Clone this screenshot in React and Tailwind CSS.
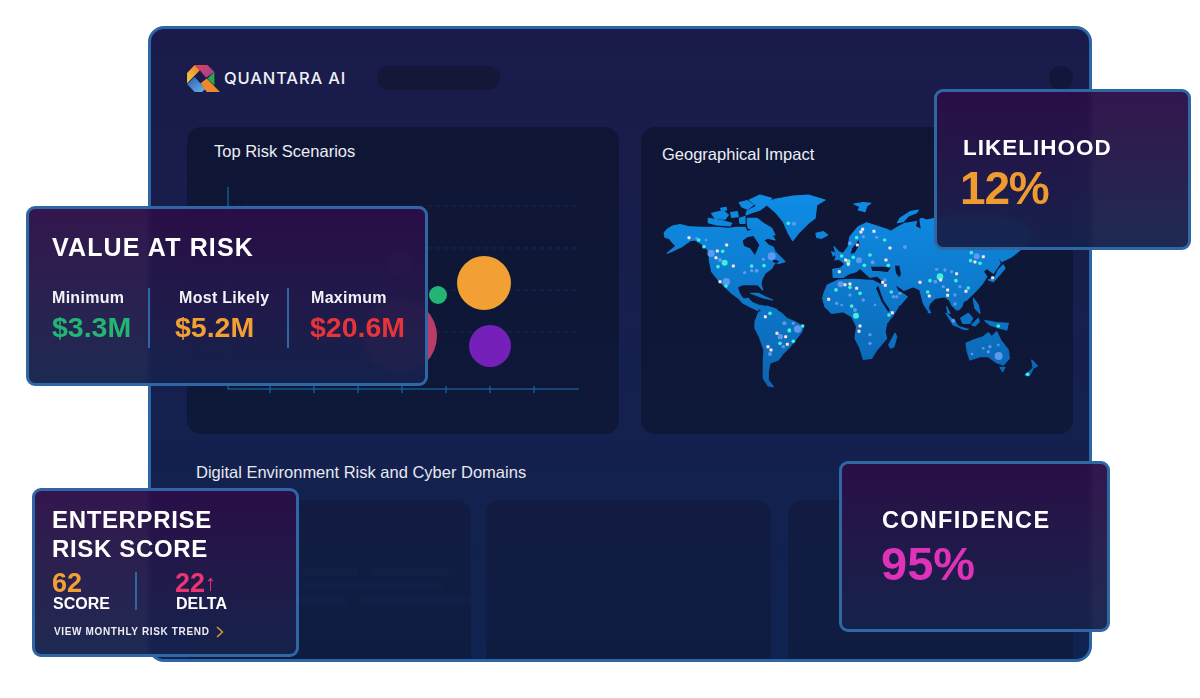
// coastlines traced in three blocks, each with its own origin (see toScreen)
const landA = [
  "13,128 22,118 38,108 60,104 85,110 120,112 165,112 205,115 235,112 255,112 262,125 290,112 330,125 345,150 325,145 310,150 325,165 340,172 345,185 360,200 375,215 360,220 345,218 335,235 315,250 305,270 303,283 308,300 295,285 265,283 245,285 232,292 238,310 248,325 270,335 295,345 320,350 350,358 330,360 300,358 275,350 250,335 215,310 195,290 175,270 155,245 148,210 148,185 130,165 105,150 90,152 65,170 40,182 22,190 48,168 35,155 28,145 15,142",
  "238,38 262,32 280,45 262,58 245,50",
  "268,30 300,15 335,25 320,45 300,60 275,68 258,75 262,62 290,48",
  "155,70 190,62 205,75 195,88 165,85",
  "212,68 232,65 235,80 215,82",
  "145,85 185,92 215,100 210,108 170,105 145,98",
  "182,55 198,52 200,60 185,62",
  "238,85 255,80 255,100 240,100",
  "262,85 290,85 310,100 335,115 345,135 325,135 310,120 295,125 280,115 265,115 262,100",
  "315,40 345,28 400,18 445,15 495,30 470,45 465,85 445,100 415,130 398,152 385,130 370,95 345,65",
  "468,130 490,125 503,135 485,145 470,142",
  "272,310 295,310 315,320 338,330 310,324",
];
const waterA = [
  "248,152 262,142 280,138 290,152 298,165 290,183 285,195 270,175 252,168",
  "340,208 358,213 350,220 338,216",
];
const landB = [
  "38,238 62,234 75,222 55,205 45,195 50,185 70,190 85,170 85,165 90,140 115,110 140,98 170,108 200,118 215,125 200,132 235,110 255,100 290,95 305,85 320,90 345,85 400,75 500,70 600,95 640,130 600,180 575,200 545,215 530,190 540,220 520,250 500,235 490,245 500,260 488,280 470,300 455,315 440,330 430,335 425,350 415,360 400,340 375,320 345,325 330,340 322,360 310,340 300,300 280,290 255,300 240,305 262,320 240,345 210,355 190,320 178,290 192,275 172,258 150,262 135,248 120,235 108,245 90,250 70,262 40,262",
  "232,98 240,85 270,65 295,60 290,68 265,78 250,95",
  "102,42 130,38 152,40 140,48 135,65 115,60 120,50",
  "42,170 60,190 65,205 45,210 50,195",
  "35,185 45,188 40,198",
  "505,270 525,262 535,240 550,225 555,235 538,255 520,275",
];
const waterB = [
  "153,230 190,230 212,233 203,246 175,243 157,243",
  "225,227 238,227 243,253 237,262 228,249",
  "97,175 116,150 118,165 104,188 92,192",
  "228,287 248,300 252,310 236,303",
  "288,108 293,88 298,88 302,116",
];
const landC = [
  "45,95 55,70 80,48 100,55 125,70 140,85 165,95 190,110 185,125 170,145 150,170 130,190 115,210 90,220 85,245 85,270 100,290 85,288 70,265 70,215 72,180 58,140 45,115",
  "0,30 25,25 42,45 55,62 30,50 10,40",
  "252,10 262,-15 295,-30 340,-32 400,-28 425,-15 440,20 455,50 475,50 460,75 440,100 435,125 440,145 410,180 395,205 370,208 360,175 345,145 350,110 335,80 310,65 275,70 255,50 248,25",
  "446,165 465,130 470,140 462,170 452,175",
  "565,55 572,68 565,68",
  "618,70 645,95 655,110 640,105",
  "650,108 685,118 670,118",
  "620,50 630,70 624,70",
  "662,85 685,70 698,85 690,100 668,100",
  "695,105 715,85 718,95 705,108",
  "700,25 715,45 720,70 705,55",
  "735,92 770,98 805,100 800,120 770,112 750,105",
  "678,160 700,150 730,140 745,128 755,140 770,125 782,150 805,180 808,205 790,225 770,218 745,200 720,200 690,210 682,185",
  "780,232 795,232 788,245",
  "875,210 892,228 880,235",
  "880,235 855,255 868,258",
  "625,0 660,5 665,30 650,60 635,45 625,20",
];
const waterC = ["415,-12 430,30 450,60 445,66 425,35 408,-5"];

const toScreen = (points, ox, oy) =>
  points
    .split(" ")
    .map((pair) => {
      const [x, y] = pair.split(",").map(Number);
      return `${(ox + x / 3).toFixed(1)},${(oy + y / 3).toFixed(1)}`;
    })
    .join(" ");

const landShapes = [
  ...landA.map((p) => toScreen(p, 660, 190)),
  ...landB.map((p) => toScreen(p, 820, 190)),
  ...landC.map((p) => toScreen(p, 740, 290)),
];
const waterShapes = [
  ...waterA.map((p) => toScreen(p, 660, 190)),
  ...waterB.map((p) => toScreen(p, 820, 190)),
  ...waterC.map((p) => toScreen(p, 740, 290)),
];

const pinkDots = [[117,173],[230,195],[202,213],[198,233],[250,258],[210,305],[638,148],[633,156],[672,154],[622,195],[720,204],[708,240],[587,240],[595,253],[568,275],[585,314],[600,312],[620,325],[536,358],[698,307],[706,316],[727,398],[630,438],[627,454],[810,307],[838,348],[893,330],[893,346],[948,334],[1028,293],[1000,230],[975,246],[920,281],[872,300],[346,410],[381,460],[407,470],[412,493],[354,500],[363,510]];
const cyanDots = [[146,180],[162,200],[218,214],[204,260],[305,258],[342,257],[228,318],[415,130],[620,173],[704,180],[575,228],[610,232],[643,256],[660,225],[715,256],[558,330],[605,378],[630,340],[717,405],[724,336],[840,302],[918,302],[955,324],[833,336],[360,400],[458,438],[418,452],[390,490],[430,484],[964,218],[962,242],[990,250],[1133,583],[1045,438],[600,322],[418,450]];
const bigCyan = [[224,248,9],[870,290,10],[618,407,9],[595,245,7]];
const blueDots = [[183,220,11],[229,305,11],[365,229,12],[432,131,6],[320,272,6],[284,278,5],[627,241,9],[668,247,6],[572,313,9],[765,201,6],[980,229,9],[856,305,6],[391,470,8],[443,447,11],[360,522,6],[403,430,6],[1046,528,12],[1020,500,5],[660,464,5],[615,390,6],[558,328,5],[168,180,4],[210,240,6],[740,350,5],[915,372,5],[910,422,6],[966,522,4],[140,175,4],[340,238,5],[305,272,5],[600,190,6],[640,170,5],[680,172,5],[705,300,5],[730,350,5],[750,340,5],[885,270,5],[905,275,5],[860,268,5],[880,320,5],[915,345,5],[930,320,5],[560,370,5],[575,375,4],[600,345,5],[640,360,5],[675,375,4],[660,490,5],[430,430,5],[400,500,5],[1015,515,5],[1000,505,4],[1045,495,4]];

function Logo() {
  return (
    <svg viewBox="33 25 95 78" className="w-[33px] h-[27px] shrink-0">
      <defs>
        <linearGradient id="lgTop" x1="0" y1="0" x2="1" y2="1">
          <stop offset="0" stopColor="#e0455a" />
          <stop offset="1" stopColor="#9a3d9a" />
        </linearGradient>
        <linearGradient id="lgLeft" x1="0" y1="1" x2="1" y2="0">
          <stop offset="0" stopColor="#f6cf3a" />
          <stop offset="1" stopColor="#ee7b2d" />
        </linearGradient>
        <linearGradient id="lgBlue" x1="0" y1="0" x2="1" y2="1">
          <stop offset="0" stopColor="#2a5fae" />
          <stop offset="1" stopColor="#6db1ec" />
        </linearGradient>
      </defs>
      <polygon points="55,25 70,40 33,78 33,48" fill="url(#lgLeft)" />
      <polygon points="55,25 92,25 112,45 88,62 70,40" fill="url(#lgTop)" />
      <polygon points="112,45 112,84 92,64" fill="#2aa84a" />
      <polygon points="33,80 55,60 86,94 76,103 55,103" fill="url(#lgBlue)" />
      <polygon points="72,78 90,64 128,103 90,103" fill="#ec8a2a" />
    </svg>
  );
}

function RiskChart() {
  return (
    <svg viewBox="0 0 432 274" className="block w-[432px] h-[274px]">
      {[46, 88, 130, 172].map((y) => (
        <line key={y} x1="41" x2="392" y1={y} y2={y} stroke="#162650" strokeDasharray="4 4" />
      ))}
      <line x1="41" x2="41" y1="27" y2="229" stroke="#1678b4" />
      <line x1="41" x2="392" y1="229" y2="229" stroke="#1678b4" />
      {[83, 127, 171, 215, 259, 303, 347].map((x) => (
        <line key={x} x1={x} x2={x} y1="226" y2="233" stroke="#1678b4" />
      ))}
      <circle cx="213" cy="104" r="12" fill="#6b1f6e" />
      <circle cx="213" cy="176" r="37" fill="#b83c68" />
      <circle cx="251" cy="135" r="9" fill="#22b573" />
      <circle cx="297" cy="123" r="27" fill="#f2a033" />
      <circle cx="303" cy="186" r="21" fill="#7520b8" />
      <text x="12" y="75" fontSize="10" fill="#26305c">2024</text>
      <text x="12" y="122" fontSize="10" fill="#26305c">2022</text>
      <text x="12" y="192" fontSize="10" fill="#26305c">2019</text>
    </svg>
  );
}

function WorldMap() {
  return (
    <svg viewBox="650 180 400 220" className="block w-[400px] h-[220px]">
      <defs>
        <linearGradient id="mapFill" gradientUnits="userSpaceOnUse" x1="0" y1="195" x2="0" y2="390">
          <stop offset="0" stopColor="#0f8de6" />
          <stop offset="1" stopColor="#0b64b0" />
        </linearGradient>
      </defs>
      {landShapes.map((p, i) => (
        <polygon key={i} points={p} fill="url(#mapFill)" stroke="url(#mapFill)" strokeWidth="1.2" strokeLinejoin="round" />
      ))}
      {waterShapes.map((p, i) => (
        <polygon key={i} points={p} fill="#0d1538" />
      ))}
      <g transform="translate(650 180) scale(0.3333)">
        {blueDots.map(([x, y, r], i) => (
          <circle key={i} cx={x} cy={y} r={r} fill="#6c9ff5" opacity="0.85" />
        ))}
        {cyanDots.map(([x, y], i) => (
          <circle key={i} cx={x} cy={y} r="5.5" fill="#3ff0d8" />
        ))}
        {bigCyan.map(([x, y, r], i) => (
          <circle key={i} cx={x} cy={y} r={r} fill="#3ff0d8" />
        ))}
        {pinkDots.map(([x, y], i) => (
          <rect key={i} x={x - 4.5} y={y - 4.5} width="9" height="9" rx="2" fill="#fde3dc" />
        ))}
      </g>
    </svg>
  );
}

function FloatCard({ className, children }) {
  return (
    <div
      className={`absolute border-[3px] border-[#2f67a5] rounded-[9px] bg-linear-to-b from-[#2b0d47]/[0.965] to-[#14224c]/[0.965] backdrop-blur-[2px] text-white ${className}`}
    >
      {children}
    </div>
  );
}

function Stat({ label, value, color, labelClass }) {
  return (
    <>
      <div className={`text-[16px] leading-[19px] font-bold tracking-[0.3px] text-[#f3f3f7] ${labelClass}`}>{label}</div>
      <div className={`mt-[5px] text-[28.5px] leading-[30px] font-bold ${color}`}>{value}</div>
    </>
  );
}

export default function App() {
  return (
    <div className="relative w-[1200px] h-[698px] bg-white overflow-hidden pl-[148px] pt-[26px] font-['Liberation_Sans',Arial,sans-serif]">
      <div className="w-[944px] h-[636px] border-[3px] border-[#2c66a4] rounded-[16px] overflow-hidden bg-linear-to-b from-[#1a1b4a] to-[#0f2350] pl-[36px] pr-[16px] pt-[37px]">
        <div className="flex items-center h-[24px]">
          <Logo />
          <span className="ml-[4px] font-['Inter',sans-serif] font-medium text-[16.5px] tracking-[0.85px] text-[#eef0f6]">
            QUANTARA AI
          </span>
          <div className="ml-[31px] w-[123px] h-[24px] rounded-full bg-[#151738]"></div>
          <div className="ml-auto w-[24px] h-[24px] rounded-full bg-[#12163a]"></div>
        </div>

        <div className="flex gap-[22px] mt-[37px]">
          <div className="w-[432px] h-[307px] rounded-[14px] bg-linear-to-b from-[#0f1535] to-[#0e1838]">
            <div className="pl-[27px] pt-[15px] h-[33px] text-[16.5px] leading-[18px] text-[#eceef4]">
              Top Risk Scenarios
            </div>
            <RiskChart />
          </div>
          <div className="w-[432px] h-[307px] rounded-[14px] bg-linear-to-b from-[#0f1535] to-[#0e1838]">
            <div className="pl-[21px] pt-[18px] text-[16.5px] leading-[18px] text-[#eceef4]">
              Geographical Impact
            </div>
            <div className="ml-[9px] mt-[17px]">
              <WorldMap />
            </div>
          </div>
        </div>

        <div className="mt-[29px] pl-[9px] text-[16.5px] leading-[18px] text-[#e6e8ef]">
          Digital Environment Risk and Cyber Domains
        </div>

        <div className="flex mt-[19px] h-[200px]">
          <div className="w-[284px] rounded-[14px] bg-linear-to-b from-[#121c42] to-[#0e1c40] pt-[68px] pl-[110px] flex flex-col gap-[6px]">
            <div className="flex gap-[14px]">
              <div className="w-[61px] h-[8px] bg-[#111f47]"></div>
              <div className="w-[83px] h-[8px] bg-[#111f47]"></div>
            </div>
            <div className="w-[145px] h-[8px] bg-[#111f47]"></div>
            <div className="flex gap-[11px]">
              <div className="w-[50px] h-[8px] bg-[#111f47]"></div>
              <div className="w-[113px] h-[8px] bg-[#111f47]"></div>
            </div>
          </div>
          <div className="w-[285px] ml-[15px] rounded-[14px] bg-linear-to-b from-[#121c42] to-[#0e1c40]"></div>
          <div className="w-[285px] ml-[17px] rounded-[14px] bg-linear-to-b from-[#121c42] to-[#0e1c40]"></div>
        </div>
      </div>

      <FloatCard className="left-[26px] top-[206px] w-[402px] h-[180px] pl-[23px] pt-[23px]">
        <div className="text-[25px] leading-[30px] font-bold tracking-[1.15px]">VALUE AT RISK</div>
        <div className="flex mt-[26px] h-[60px]">
          <div className="w-[96px]">
            <Stat label="Minimum" value="$3.3M" color="text-[#22b573]" />
          </div>
          <div className="w-[139px] border-l-2 border-[#2f67a5] pl-[25px]">
            <Stat label="Most Likely" value="$5.2M" color="text-[#f2a033]" labelClass="ml-[4px]" />
          </div>
          <div className="border-l-2 border-[#2f67a5] pl-[21px]">
            <Stat label="Maximum" value="$20.6M" color="text-[#e5343a]" labelClass="ml-[1px]" />
          </div>
        </div>
      </FloatCard>

      <FloatCard className="left-[32px] top-[488px] w-[267px] h-[169px] pl-[17px] pt-[14px]">
        <div className="text-[24px] leading-[29px] font-bold tracking-[0.65px]">
          ENTERPRISE
          <br />
          RISK SCORE
        </div>
        <div className="flex mt-[7px]">
          <div className="w-[83px]">
            <div className="text-[27px] leading-[26px] font-bold text-[#f2a033]">62</div>
            <div className="ml-[1px] text-[16px] leading-[16px] font-bold">SCORE</div>
          </div>
          <div className="border-l-2 border-[#2f67a5] pl-[38px] h-[38px] mt-[2px]">
            <div className="-mt-[2px] flex items-center text-[27px] leading-[26px] font-bold text-[#ea3570]">
              22<span className="text-[22px] leading-[20px] font-normal">↑</span>
            </div>
            <div className="ml-[1px] text-[16px] leading-[16px] font-bold whitespace-nowrap">DELTA</div>
          </div>
        </div>
        <div className="mt-[13px] ml-[2px] flex items-center text-[10px] leading-[14px] font-bold tracking-[0.65px] text-[#eceef4]">
          VIEW MONTHLY RISK TREND
          <svg viewBox="0 0 8 12" className="ml-[6px] w-[8px] h-[12px]" fill="none" stroke="#e8a02f" strokeWidth="1.4">
            <polyline points="1,1 6.5,6 1,11" />
          </svg>
        </div>
      </FloatCard>

      <FloatCard className="left-[934px] top-[89px] w-[257px] h-[161px] pl-[26px] pt-[43px]">
        <div className="text-[22.5px] leading-[26px] font-bold tracking-[1px]">LIKELIHOOD</div>
        <div className="-ml-[3px] mt-[2px] text-[46px] leading-[50px] font-bold tracking-[-1.2px] text-[#ee9c2f]">12%</div>
      </FloatCard>

      <FloatCard className="left-[839px] top-[461px] w-[271px] h-[171px] pl-[40px] pt-[43px]">
        <div className="text-[23.5px] leading-[26px] font-bold tracking-[1.3px]">CONFIDENCE</div>
        <div className="-ml-[1px] mt-[6px] text-[47px] leading-[50px] font-bold text-[#de32b8]">95%</div>
      </FloatCard>
    </div>
  );
}
